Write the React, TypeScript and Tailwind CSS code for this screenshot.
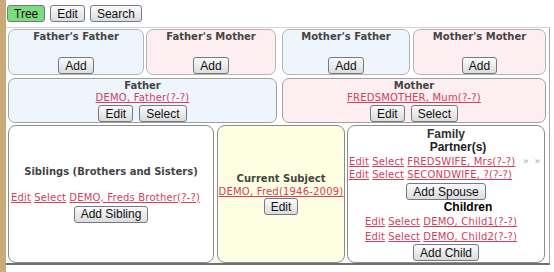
import React from "react";

const btn =
  "h-[17px] px-[6px] border border-[#717b87] rounded-[3px] bg-gradient-to-b from-[#fbfbfb] to-[#dcdcdc] text-[12px] leading-[14px] text-[#111] font-['Liberation_Sans',Arial,sans-serif] whitespace-nowrap";
const head = "font-['DejaVu_Sans',Verdana,sans-serif] font-bold text-[10px] leading-[12px] text-[#444] whitespace-nowrap";
const link = "text-[#d2405e] underline font-['DejaVu_Sans',Verdana,sans-serif] text-[10px] tracking-[0.2px] whitespace-nowrap";

function Btn({ label, className = "" }: { label: string; className?: string }) {
  return <button className={`${btn} ${className}`}>{label}</button>;
}

function LinkRow({ name }: { name: string }) {
  return (
    <span className="flex gap-[3px]">
      <a className={link}>Edit</a>
      <a className={link}>Select</a>
      <a className={link}>{name}</a>
    </span>
  );
}

function Grand({ title, bg, w }: { title: string; bg: string; w: string }) {
  return (
    <div className={`${w} ${bg} h-[46px] border border-[#b4b4b4] rounded-[7px] flex flex-col items-center`}>
      <div className={`${head} pt-[1px]`}>{title}</div>
      <Btn label="Add" className="mt-auto" />
    </div>
  );
}

function Parent({ title, name, bg, w }: { title: string; name: string; bg: string; w: string }) {
  return (
    <div className={`${w} ${bg} h-[45px] border border-[#a0a0a0] rounded-[7px] flex flex-col items-center`}>
      <div className={`${head} pt-[1px]`}>{title}</div>
      <a className={`${link} leading-[12px]`}>{name}</a>
      <div className="flex gap-[6px] mt-[1px]">
        <Btn label="Edit" />
        <Btn label="Select" />
      </div>
    </div>
  );
}

export default function App() {
  return (
    <div className="flex h-[272px] w-[554px] bg-white">
      <div className="w-[6px] bg-[#c8aa78]" />
      <div className="flex flex-col">
        <div className="flex gap-[5px] pl-[1px] pt-[5px] h-[27px]">
          <Btn label="Tree" className="bg-none bg-[#7ddc7d] border-[#8fcf8f]" />
          <Btn label="Edit" />
          <Btn label="Search" />
        </div>
        <div className="w-[544px] border-t border-t-[#d4d4d4] border-r border-r-[#a8a8a8] border-b-2 border-b-[#6e6e6e] pl-[2px] pt-[1px] flex flex-col">
          <div className="flex">
            <Grand title="Father's Father" bg="bg-[#eef5fd]" w="w-[136px]" />
            <div className="w-[2px]" />
            <Grand title="Father's Mother" bg="bg-[#fdeef1]" w="w-[130px]" />
            <div className="w-[6px]" />
            <Grand title="Mother's Father" bg="bg-[#eef5fd]" w="w-[128px]" />
            <div className="w-[3px]" />
            <Grand title="Mother's Mother" bg="bg-[#fdeef1]" w="w-[133px]" />
          </div>
          <div className="flex gap-[5px] mt-[3px]">
            <Parent title="Father" name="DEMO, Father(?-?)" bg="bg-[#eef5fd]" w="w-[269px]" />
            <Parent title="Mother" name="FREDSMOTHER, Mum(?-?)" bg="bg-[#fdeef1]" w="w-[264px]" />
          </div>
          <div className="flex mt-[2px] h-[138px]">
            <div className="w-[206px] bg-white border border-[#8c8c8c] rounded-[8px] flex flex-col justify-center">
              <div className={`${head} text-center`}>Siblings (Brothers and Sisters)</div>
              <div className="mt-[14px] pl-[2px] leading-[12px]">
                <LinkRow name="DEMO, Freds Brother(?-?)" />
              </div>
              <Btn label="Add Sibling" className="self-center mt-[2px]" />
            </div>
            <div className="w-[3px]" />
            <div className="w-[128px] bg-[#fefee2] border border-[#8c8c8c] rounded-[8px] flex flex-col items-center justify-center">
              <div className={head}>Current Subject</div>
              <a className={`${link} leading-[12px] mt-[1px]`}>DEMO, Fred(1946-2009)</a>
              <Btn label="Edit" />
            </div>
            <div className="w-[2px]" />
            <div className="w-[198px] bg-white border border-[#8c8c8c] rounded-[8px] flex flex-col font-['Liberation_Sans',Arial,sans-serif]">
              <div className="self-center font-bold text-[12px] leading-[14px] mt-[1px] text-[#333]">Family</div>
              <div className="self-center font-bold text-[12px] leading-[12px] text-[#222] ml-[24px]">Partner(s)</div>
              <div className="flex items-center pl-[1px] leading-[13px] mt-[2px]">
                <LinkRow name="FREDSWIFE, Mrs(?-?)" />
                <span className="ml-[8px] text-[9px] text-[#999] tracking-[2px]">» »</span>
              </div>
              <div className="pl-[1px] leading-[13px]">
                <LinkRow name="SECONDWIFE, ?(?-?)" />
              </div>
              <Btn label="Add Spouse" className="self-center mt-[2px]" />
              <div className="self-center font-bold text-[12px] leading-[13px] mt-[1px] text-black ml-[44px]">Children</div>
              <div className="pl-[17px] leading-[15px]">
                <LinkRow name="DEMO, Child1(?-?)" />
              </div>
              <div className="pl-[17px] leading-[15px]">
                <LinkRow name="DEMO, Child2(?-?)" />
              </div>
              <Btn label="Add Child" className="self-center" />
            </div>
          </div>
        </div>
      </div>
    </div>
  );
}
